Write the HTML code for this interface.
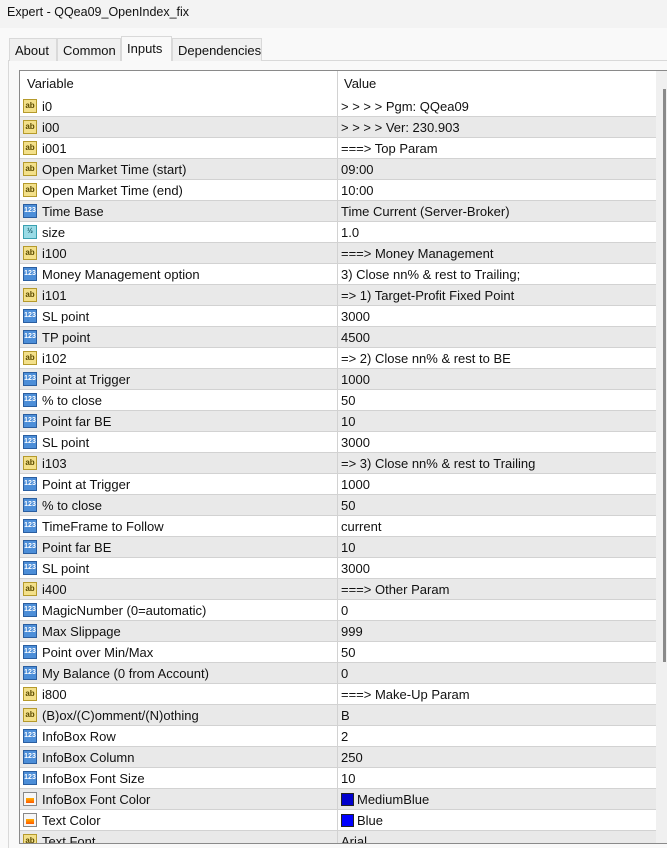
<!DOCTYPE html>
<html style="overflow:hidden"><head><meta charset="utf-8"><style>
*{margin:0;padding:0;box-sizing:border-box}
html,body{width:667px;height:848px;overflow:hidden}
body{background:#f9f9f9;font-family:"Liberation Sans",sans-serif;font-size:13px;color:#111;position:relative}
.title{position:absolute;left:0;top:0;width:667px;height:28px;background:#f3f3f3;padding:5px 0 0 7px;font-size:12.5px}
.tab{position:absolute;top:38px;height:23px;border:1px solid #d9d9d9;border-bottom:none;background:#f0f0f0;padding:4px 0 0 5px;font-size:13px}
.panel{position:absolute;left:8px;top:60px;width:670px;height:790px;border:1px solid #d9d9d9;background:#f9f9f9}
.frame{position:absolute;left:19px;top:70px;width:648px;height:774px;border-top:1px solid #8a8a8a;border-left:1px solid #8a8a8a;border-bottom:1px solid #8a8a8a;background:#fff;overflow:hidden}
.hdr{position:absolute;left:0;top:0;width:636px;height:25px;background:#fff}
.hdr span{position:absolute;top:5px}
.rows{position:absolute;left:0;top:25px;width:636px}
.r{height:21px;position:relative;border-bottom:1px solid #d2d2d2;background:#fff}
.r:nth-child(even){background:#e9e9e9}
.r .n{position:absolute;left:22px;top:3px;white-space:nowrap}
.r .v{position:absolute;left:321px;top:3px;white-space:nowrap}
.r i{position:absolute;left:3px;top:3px;width:14px;height:14px;font-style:normal;font-size:7px;line-height:12px;text-align:center;font-weight:bold}
.a{background:#f3e08a;border:1px solid #b59a2c;color:#5a4a00;font-size:8px!important}
.b{background:#4c8ed8;border:1px solid #2a5ea0;color:#fff}
.h{background:#9adbe6;border:1px solid #3aa0b0;color:#185a66}
.c{background:#f6f6f6;border:1px solid #888}
.c:after{content:"";position:absolute;left:2px;top:5px;width:8px;height:5px;background:linear-gradient(#ffb000,#ff5a00)}
.sw{display:inline-block;width:13px;height:13px;vertical-align:-2px;margin-right:3px;border:1px solid #222}
.div{position:absolute;left:317px;top:0;width:1px;height:774px;background:#d2d2d2}
.sb{position:absolute;left:636px;top:0;width:12px;height:774px;background:#f0f0f0}
.th{position:absolute;left:643px;top:18px;width:3px;height:573px;background:#8a8a8a}
</style></head><body>
<div class="title">Expert - QQea09_OpenIndex_fix</div>
<div class="panel"></div>
<div class="tab" style="left:9px;width:48px">About</div>
<div class="tab" style="left:57px;width:64px">Common</div>
<div class="tab" style="left:121px;width:51px;top:36px;height:25px;background:#f9f9f9;padding-top:4px">Inputs</div>
<div class="tab" style="left:172px;width:90px">Dependencies</div>
<div class="frame">
<div class="hdr"><span style="left:7px">Variable</span><span style="left:324px">Value</span></div>
<div class="rows">
<div class="r"><i class="a">ab</i><span class="n">i0</span><span class="v">&gt; &gt; &gt; &gt; Pgm: QQea09</span></div>
<div class="r"><i class="a">ab</i><span class="n">i00</span><span class="v">&gt; &gt; &gt; &gt; Ver: 230.903</span></div>
<div class="r"><i class="a">ab</i><span class="n">i001</span><span class="v">===&gt; Top Param</span></div>
<div class="r"><i class="a">ab</i><span class="n">Open Market Time (start)</span><span class="v">09:00</span></div>
<div class="r"><i class="a">ab</i><span class="n">Open Market Time (end)</span><span class="v">10:00</span></div>
<div class="r"><i class="b">123</i><span class="n">Time Base</span><span class="v">Time Current (Server-Broker)</span></div>
<div class="r"><i class="h">½</i><span class="n">size</span><span class="v">1.0</span></div>
<div class="r"><i class="a">ab</i><span class="n">i100</span><span class="v">===&gt; Money Management</span></div>
<div class="r"><i class="b">123</i><span class="n">Money Management option</span><span class="v">3) Close nn% &amp; rest to Trailing;</span></div>
<div class="r"><i class="a">ab</i><span class="n">i101</span><span class="v">=&gt; 1) Target-Profit Fixed Point</span></div>
<div class="r"><i class="b">123</i><span class="n">SL point</span><span class="v">3000</span></div>
<div class="r"><i class="b">123</i><span class="n">TP point</span><span class="v">4500</span></div>
<div class="r"><i class="a">ab</i><span class="n">i102</span><span class="v">=&gt; 2) Close nn% &amp; rest to BE</span></div>
<div class="r"><i class="b">123</i><span class="n">Point at Trigger</span><span class="v">1000</span></div>
<div class="r"><i class="b">123</i><span class="n">% to close</span><span class="v">50</span></div>
<div class="r"><i class="b">123</i><span class="n">Point far BE</span><span class="v">10</span></div>
<div class="r"><i class="b">123</i><span class="n">SL point</span><span class="v">3000</span></div>
<div class="r"><i class="a">ab</i><span class="n">i103</span><span class="v">=&gt; 3) Close nn% &amp; rest to Trailing</span></div>
<div class="r"><i class="b">123</i><span class="n">Point at Trigger</span><span class="v">1000</span></div>
<div class="r"><i class="b">123</i><span class="n">% to close</span><span class="v">50</span></div>
<div class="r"><i class="b">123</i><span class="n">TimeFrame to Follow</span><span class="v">current</span></div>
<div class="r"><i class="b">123</i><span class="n">Point far BE</span><span class="v">10</span></div>
<div class="r"><i class="b">123</i><span class="n">SL point</span><span class="v">3000</span></div>
<div class="r"><i class="a">ab</i><span class="n">i400</span><span class="v">===&gt; Other Param</span></div>
<div class="r"><i class="b">123</i><span class="n">MagicNumber (0=automatic)</span><span class="v">0</span></div>
<div class="r"><i class="b">123</i><span class="n">Max Slippage</span><span class="v">999</span></div>
<div class="r"><i class="b">123</i><span class="n">Point over Min/Max</span><span class="v">50</span></div>
<div class="r"><i class="b">123</i><span class="n">My Balance (0 from Account)</span><span class="v">0</span></div>
<div class="r"><i class="a">ab</i><span class="n">i800</span><span class="v">===&gt; Make-Up Param</span></div>
<div class="r"><i class="a">ab</i><span class="n">(B)ox/(C)omment/(N)othing</span><span class="v">B</span></div>
<div class="r"><i class="b">123</i><span class="n">InfoBox Row</span><span class="v">2</span></div>
<div class="r"><i class="b">123</i><span class="n">InfoBox Column</span><span class="v">250</span></div>
<div class="r"><i class="b">123</i><span class="n">InfoBox Font Size</span><span class="v">10</span></div>
<div class="r"><i class="c"></i><span class="n">InfoBox Font Color</span><span class="v"><span class="sw" style="background:#0000cd"></span>MediumBlue</span></div>
<div class="r"><i class="c"></i><span class="n">Text Color</span><span class="v"><span class="sw" style="background:#0000ff"></span>Blue</span></div>
<div class="r"><i class="a">ab</i><span class="n">Text Font</span><span class="v">Arial</span></div>
</div>
<div class="div"></div>
<div class="sb"></div><div class="th"></div>
</div>
</body></html>
